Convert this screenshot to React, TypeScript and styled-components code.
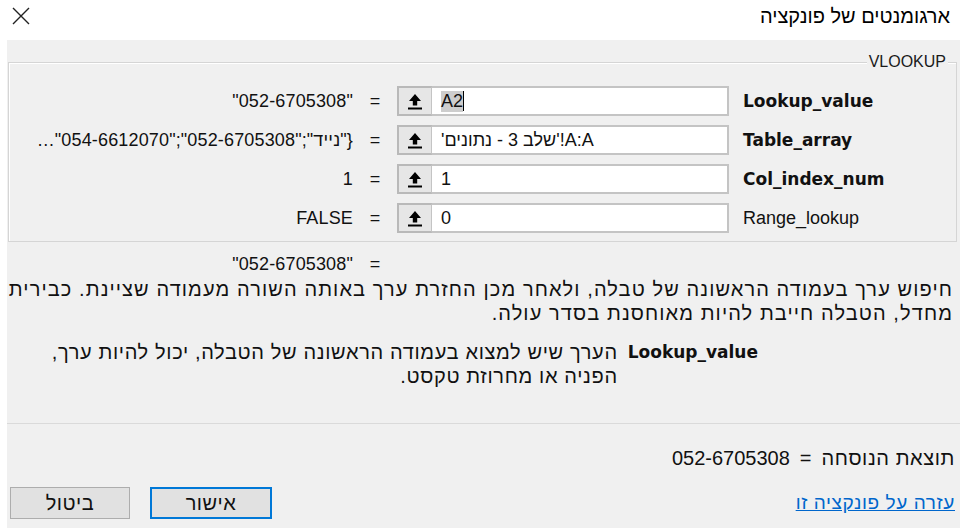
import styled, { createGlobalStyle } from 'styled-components';

const GlobalStyle = createGlobalStyle`
	html, body {
		margin: 0;
		padding: 0;
		background: #ffffff;
	}
	body {
		font-family: 'Liberation Sans', Arial, sans-serif;
		color: #000000;
	}
`;

interface Arg {
	name: string;
	bold: boolean;
	input: string;
	value: string;
	selected?: boolean;
}

const args: Arg[] = [
	{ name: 'Lookup_value', bold: true, input: 'A2', value: '"052-6705308"', selected: true },
	{
		name: 'Table_array',
		bold: true,
		input: "'שלב 3 - נתונים'!A:A",
		value: '{"נייד";"052-6705308";"054-6612070"…',
	},
	{ name: 'Col_index_num', bold: true, input: '1', value: '1' },
	{ name: 'Range_lookup', bold: false, input: '0', value: 'FALSE' },
];

const CloseIcon = () => (
	<svg width="18" height="18" viewBox="0 0 18 18">
		<path d="M1 1 L17 17 M17 1 L1 17" stroke="#222" strokeWidth="1.4" fill="none" />
	</svg>
);

const RefIcon = () => (
	<svg width="14" height="17" viewBox="0 0 14 17">
		<path d="M7 1 L13 8 H9.2 V12.5 H4.8 V8 H1 Z" fill="#000" />
		<rect x="0" y="14.5" width="14" height="2" fill="#000" />
	</svg>
);

export default function App() {
	return (
		<>
			<GlobalStyle />
			<Dialog>
				<TitleBar>
					<CloseButton>
						<CloseIcon />
					</CloseButton>
					<Title dir="rtl">ארגומנטים של פונקציה</Title>
				</TitleBar>
				<Main>
					<Body>
						<Group>
							<Legend>VLOOKUP</Legend>
							{args.map((a) => (
								<ArgRow key={a.name}>
									<ArgValue dir="rtl">{a.value}</ArgValue>
									<Eq>=</Eq>
									<RefButton>
										<RefIcon />
									</RefButton>
									<ArgInput>
										{a.selected ? (
											<>
												<Selected>{a.input}</Selected>
												<Caret />
											</>
										) : (
											a.input
										)}
									</ArgInput>
									<ArgLabel $bold={a.bold}>{a.name}</ArgLabel>
								</ArgRow>
							))}
						</Group>
						<ResultRow>
							<ArgValue dir="rtl">"052-6705308"</ArgValue>
							<Eq>=</Eq>
						</ResultRow>
						<Description dir="rtl">
							חיפוש ערך בעמודה הראשונה של טבלה, ולאחר מכן החזרת ערך באותה השורה מעמודה שציינת. כבירית
							<br />
							מחדל, הטבלה חייבת להיות מאוחסנת בסדר עולה.
						</Description>
						<ArgHelp dir="rtl">
							<HelpName>Lookup_value</HelpName>
							<HelpText>
								הערך שיש למצוא בעמודה הראשונה של הטבלה, יכול להיות ערך,
								<br />
								הפניה או מחרוזת טקסט.
							</HelpText>
						</ArgHelp>
					</Body>
					<Footer>
						<FormulaResult dir="rtl">
							<HebrewText>תוצאת הנוסחה</HebrewText>
							<span>=</span>
							<span>052-6705308</span>
						</FormulaResult>
						<ButtonBar>
							<DialogButton>ביטול</DialogButton>
							<DialogButton $primary>אישור</DialogButton>
							<HelpLink href="#" dir="rtl">
								עזרה על פונקציה זו
							</HelpLink>
						</ButtonBar>
					</Footer>
				</Main>
			</Dialog>
		</>
	);
}

const Dialog = styled.div`
	width: 963px;
	height: 528px;
	display: flex;
	flex-direction: column;
	background: #ffffff;
	overflow: hidden;
`;

const TitleBar = styled.div`
	height: 40px;
	display: flex;
	align-items: flex-start;
	justify-content: space-between;
	padding: 0 13px 0 12px;
	box-sizing: border-box;
`;

const CloseButton = styled.div`
	margin-top: 7px;
	width: 18px;
	height: 18px;
`;

const Title = styled.div`
	margin-top: 4px;
	font-size: 20px;
	line-height: 24px;
	color: #000;
`;

const Main = styled.div`
	flex: 1;
	margin: 0 3px 0 7px;
	background: #f0f0f0;
	display: flex;
	flex-direction: column;
`;

const Body = styled.div`
	height: 384px;
	box-sizing: border-box;
	padding: 22px 3px 0 1px;
	border-bottom: 1px solid #dadada;
`;

const Group = styled.div`
	position: relative;
	height: 180px;
	box-sizing: border-box;
	padding: 23px 0 0 0;
	border: 1px solid #d5d5d5;
	box-shadow: inset 1px 1px 0 #ffffff;
	display: flex;
	flex-direction: column;
	gap: 9px;
`;

const Legend = styled.div`
	position: absolute;
	top: -10px;
	right: 8px;
	padding: 0 2px;
	background: #f0f0f0;
	font-size: 16px;
	line-height: 18px;
	color: #1a1a1a;
`;

const ArgRow = styled.div`
	display: grid;
	grid-template-columns: 344px 44px 35px 297px 1fr;
	align-items: center;
	height: 30px;
`;

const ArgValue = styled.div`
	font-size: 18px;
	white-space: nowrap;
	overflow: hidden;
	text-align: right;
	letter-spacing: 0.15px;
	color: #111;
`;

const Eq = styled.div`
	font-size: 18px;
	text-align: center;
	color: #111;
`;

const RefButton = styled.div`
	height: 30px;
	box-sizing: border-box;
	border: 2px solid #b9b9b9;
	border-right: 1px solid #c4c4c4;
	background: #e6e6e6;
	display: flex;
	align-items: center;
	justify-content: center;
`;

const ArgInput = styled.div`
	height: 30px;
	box-sizing: border-box;
	border: 2px solid #c4c4c4;
	border-left: none;
	background: #ffffff;
	display: flex;
	align-items: center;
	padding-left: 9px;
	font-size: 18px;
	white-space: nowrap;
	overflow: hidden;
	color: #111;
`;

const Selected = styled.span`
	background: #cdcdcd;
`;

const Caret = styled.span`
	display: inline-block;
	width: 1px;
	height: 20px;
	background: #000;
`;

const ArgLabel = styled.div<{ $bold: boolean }>`
	padding-left: 14px;
	font-family: ${(p) => (p.$bold ? "'DejaVu Sans', sans-serif" : "'Liberation Sans', Arial, sans-serif")};
	font-weight: ${(p) => (p.$bold ? 700 : 400)};
	font-size: ${(p) => (p.$bold ? '17px' : '18px')};
	color: #111;
	white-space: nowrap;
`;

const ResultRow = styled.div`
	display: grid;
	grid-template-columns: 344px 44px;
	align-items: center;
	height: 24px;
	margin: 10px 0 0 1px;
`;

const Description = styled.div`
	margin-top: 1px;
	padding-right: 4px;
	font-size: 20px;
	letter-spacing: 1.1px;
	line-height: 24px;
	white-space: nowrap;
	color: #111;
`;

const ArgHelp = styled.div`
	margin-top: 15px;
	padding-right: 199px;
	display: flex;
	gap: 10px;
	align-items: flex-start;
	line-height: 24px;
	color: #111;
`;

const HelpName = styled.div`
	font-family: 'DejaVu Sans', sans-serif;
	font-weight: 700;
	font-size: 17px;
	white-space: nowrap;
`;

const HelpText = styled.div`
	font-size: 20px;
	letter-spacing: 0.65px;
	white-space: nowrap;
`;

const Footer = styled.div`
	flex: 1;
	display: flex;
	flex-direction: column;
	padding: 22px 5px 0 3px;
`;

const FormulaResult = styled.div`
	display: flex;
	align-items: baseline;
	gap: 10px;
	font-size: 20px;
	line-height: 24px;
	color: #111;
`;

const HebrewText = styled.span`
	font-size: 20px;
	letter-spacing: 0.6px;
`;

const ButtonBar = styled.div`
	margin-top: 17px;
	display: flex;
	align-items: center;
	gap: 20px;
`;

const DialogButton = styled.div<{ $primary?: boolean }>`
	width: ${(p) => (p.$primary ? '122px' : '120px')};
	height: 32px;
	box-sizing: border-box;
	display: flex;
	align-items: center;
	justify-content: center;
	background: #e1e1e1;
	border: ${(p) => (p.$primary ? '2px solid #0078d7' : '1px solid #adadad')};
	font-size: 20px;
	letter-spacing: 0.5px;
	color: #111;
`;

const HelpLink = styled.a`
	margin-left: auto;
	font-size: 19px;
	letter-spacing: 0.6px;
	color: #0066cc;
	text-decoration: underline;
`;
